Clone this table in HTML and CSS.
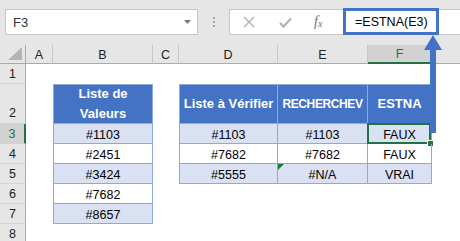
FILE: index.html
```html
<!DOCTYPE html>
<html lang="fr">
<head>
<meta charset="utf-8">
<title>ESTNA</title>
<link rel="stylesheet" href="styles.css">
</head>
<body>
<div class="app">
  <div class="toolbar">
    <div class="namebox">
      <span class="ref">F3</span>
      <svg class="dd" width="7" height="4" viewBox="0 0 7 4"><polygon points="0,0 7,0 3.5,4" fill="#7a7a7a"/></svg>
    </div>
    <div class="grip"><i></i><i></i><i></i></div>
    <div class="fbar">
      <div class="fbtns">
        <svg width="12" height="12" viewBox="0 0 12 12"><path d="M1 1 L11 11 M11 1 L1 11" stroke="#b0b0b0" stroke-width="1.4" fill="none"/></svg>
        <svg width="13" height="11" viewBox="0 0 13 11"><path d="M1 6 L4.5 9.5 L12 1.5" stroke="#b0b0b0" stroke-width="2" fill="none"/></svg>
        <span class="fx">f<sub>x</sub></span>
      </div>
      <div class="formula">=ESTNA(E3)</div>
    </div>
  </div>

  <div class="sheet">
    <!-- column headers -->
    <div class="ch corner"><svg width="14" height="13" viewBox="0 0 14 13"><polygon points="14,0 14,13 0,13" fill="#b4b4b4"/></svg></div>
    <div class="ch">A</div>
    <div class="ch">B</div>
    <div class="ch">C</div>
    <div class="ch">D</div>
    <div class="ch">E</div>
    <div class="ch on">F</div>
    <div class="ch last"></div>

    <!-- row 1 -->
    <div class="rh">1</div>
    <div></div><div></div><div></div><div></div><div></div><div></div><div></div>

    <!-- row 2 -->
    <div class="rh tall">2</div>
    <div></div>
    <div class="c th tl tt">Liste de<br>Valeurs</div>
    <div></div>
    <div class="c th tl tt">Liste à Vérifier</div>
    <div class="c th tt caps">RECHERCHEV</div>
    <div class="c th tt">ESTNA</div>
    <div></div>

    <!-- row 3 -->
    <div class="rh on">3</div>
    <div></div>
    <div class="c band tl">#1103</div>
    <div></div>
    <div class="c band tl">#1103</div>
    <div class="c band">#1103</div>
    <div class="c band cur">FAUX<span class="sel"><span class="handle"></span></span></div>
    <div></div>

    <!-- row 4 -->
    <div class="rh">4</div>
    <div></div>
    <div class="c tl">#2451</div>
    <div></div>
    <div class="c tl">#7682</div>
    <div class="c">#7682</div>
    <div class="c">FAUX</div>
    <div></div>

    <!-- row 5 -->
    <div class="rh">5</div>
    <div></div>
    <div class="c band tl">#3424</div>
    <div></div>
    <div class="c band tl">#5555</div>
    <div class="c band err">#N/A<span class="flag"></span></div>
    <div class="c band">VRAI</div>
    <div></div>

    <!-- row 6 -->
    <div class="rh">6</div>
    <div></div>
    <div class="c tl">#7682</div>
    <div></div><div></div><div></div><div></div><div></div>

    <!-- row 7 -->
    <div class="rh">7</div>
    <div></div>
    <div class="c band tl">#8657</div>
    <div></div><div></div><div></div><div></div><div></div>

    <!-- row 8 -->
    <div class="rh">8</div>
    <div></div><div></div><div></div><div></div><div></div><div></div><div></div>
  </div>

  <svg class="arrow" width="18" height="98" viewBox="0 0 18 98">
    <polygon points="9,0 18,15 0,15" fill="#4472c4"/>
    <rect x="6" y="14" width="6" height="84" fill="#4472c4"/>
  </svg>
</div>
</body>
</html>
```

FILE: styles.css
```css
* { box-sizing: border-box; }

html, body {
  margin: 0;
  padding: 0;
  background: #fff;
}

body {
  font-family: "Liberation Sans", Arial, sans-serif;
  font-size: 12.5px;
  color: #000;
}

.app {
  position: relative;
  width: 460px;
  height: 241px;
  overflow: hidden;
}

/* ---------- name box + formula bar ---------- */
.toolbar {
  height: 45px;
  background: #e6e6e6;
  display: flex;
  align-items: flex-start;
  padding: 9px 0 0 5px;
}

.namebox {
  width: 193px;
  height: 26px;
  background: #fff;
  border: 1px solid #c6c6c6;
  display: flex;
  align-items: center;
  justify-content: space-between;
  padding: 0 6px 0 7px;
  font-size: 13px;
  color: #333;
}

.grip {
  width: 31px;
  height: 26px;
  display: flex;
  flex-direction: column;
  align-items: center;
  justify-content: center;
  gap: 2px;
}

.grip i {
  display: block;
  width: 2px;
  height: 2px;
  background: #a6a6a6;
}

.fbar {
  flex: 1;
  height: 26px;
  background: #fff;
  border: 1px solid #c6c6c6;
  border-right: none;
  display: flex;
  align-items: center;
}

.fbtns {
  width: 113px;
  height: 100%;
  display: flex;
  align-items: center;
  padding-left: 13px;
  gap: 24px;
}

.fx {
  font-family: "Liberation Serif", "Times New Roman", serif;
  font-style: italic;
  font-size: 14px;
  color: #6e6e6e;
  margin-left: -2px;
}

.fx sub {
  font-size: 10px;
  vertical-align: -1px;
}

.formula {
  width: 96px;
  height: 27px;
  margin-top: -1px;
  border: 3px solid #4472c4;
  display: flex;
  align-items: center;
  padding-left: 9px;
  font-size: 12.5px;
  color: #000;
}

/* ---------- sheet grid ---------- */
.sheet {
  display: grid;
  grid-template-columns: 26px 27px 100px 26px 99px 90px 64px 1fr;
  grid-template-rows: 19px 20px 40px 20px 20px 20px 20px 20px 20px;
}

.ch {
  background: #e6e6e6;
  border-right: 1px solid #c8c8c8;
  border-bottom: 1px solid #ababab;
  display: flex;
  align-items: center;
  justify-content: center;
  font-size: 12.5px;
  color: #222;
  padding-top: 1px;
}

.ch.corner {
  justify-content: flex-end;
  align-items: flex-end;
  padding: 0 3px 3px 0;
  border-right-color: #ababab;
}

.ch.last { border-right: none; }

.ch.on {
  background: #d2d2d2;
  color: #217346;
  border-bottom: 2px solid #217346;
}

.rh {
  background: #e6e6e6;
  border-right: 1px solid #ababab;
  border-bottom: 1px solid #d4d4d4;
  display: flex;
  align-items: center;
  justify-content: center;
  font-size: 12.5px;
  color: #222;
  padding-top: 1px;
}

.rh.tall {
  align-items: flex-end;
  padding-bottom: 3px;
}

.rh.on {
  background: #d2d2d2;
  color: #217346;
  border-right: 2px solid #217346;
}

/* ---------- table cells ---------- */
.c {
  position: relative;
  display: flex;
  align-items: center;
  justify-content: center;
  text-align: center;
  border-right: 1px solid #8ea9db;
  border-bottom: 1px solid #8ea9db;
  padding-top: 2px;
}

.c.tl { border-left: 1px solid #8ea9db; }
.c.tt { border-top: 1px solid #8ea9db; }

.c.th {
  background: #4472c4;
  color: #fff;
  font-weight: bold;
  font-size: 13px;
  line-height: 20px;
  padding-top: 0;
  border-right-color: #8ea9db;
}

/* all-caps header set tighter so it sits inside its column */
.c.th.caps {
  font-size: 12px;
  letter-spacing: -0.4px;
}

.c.band { background: #d9e1f2; }

.sel {
  position: absolute;
  left: -1px;
  top: -1px;
  right: 0;
  bottom: -1px;
  border: 2px solid #217346;
}

.handle {
  position: absolute;
  right: -5px;
  bottom: -5px;
  width: 7px;
  height: 7px;
  background: #217346;
  border: 1px solid #fff;
}

.flag {
  position: absolute;
  left: 0;
  top: 0;
  width: 0;
  height: 0;
  border-top: 6px solid #1e7b34;
  border-right: 6px solid transparent;
}

/* ---------- arrow from formula to selected cell ---------- */
.arrow {
  position: absolute;
  left: 424px;
  top: 35px;
}
```
